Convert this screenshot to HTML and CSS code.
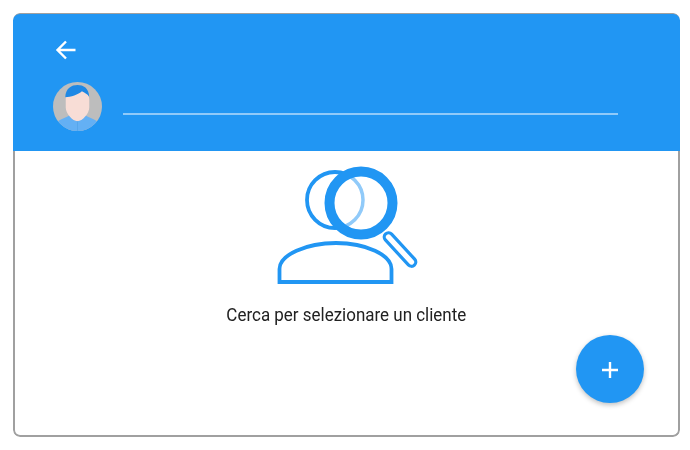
FILE: index.html
```html
<!DOCTYPE html>
<html lang="it">
<head>
<meta charset="utf-8">
<title>Cerca cliente</title>
<link rel="stylesheet" href="styles.css">
</head>
<body>
<main class="card">
  <header class="header">
    <button class="back" aria-label="Indietro">
      <svg width="24" height="24" viewBox="0 0 24 24" fill="none" stroke="#fff" stroke-width="2.4"><path d="M21.500 12H4M12 3.500 3.500 12l8.500 8.500"/></svg>
    </button>
    <div class="search-row">
      <svg class="avatar" width="49" height="49" viewBox="0 0 50 50">
        <defs><clipPath id="av"><circle cx="25" cy="25" r="25"/></clipPath></defs>
        <g clip-path="url(#av)">
          <rect width="50" height="50" fill="#bdbdbd"/>
          <path d="M2 50V43C6 38 13 37 19 33H31C37 37 44 38 48 43V50Z" fill="#64b0f4"/>
          <path d="M13 15C15 11 21 10 26 9C33 9 37 12 37 18V26C37 32 30 40 25 40C20 40 13 32 13 26Z" fill="#f8ddd6"/>
          <path d="M12.500 15.500C13 6 19 3 25 3C31 3 36.500 6 37 15C35 12 32 11 29.500 9.500C26 13 18 15.500 12.500 15.500Z" fill="#1e88e5"/>
          <path d="M25 40V50" stroke="#4f9fe6" stroke-width=".6"/>
        </g>
      </svg>
      <div class="search-line"></div>
    </div>
  </header>
  <section class="empty">
    <svg class="empty-icon" width="170" height="140" viewBox="0 0 170 140" fill="none" stroke="#2196f3">
      <defs><clipPath id="lens"><circle cx="100" cy="48" r="27"/></clipPath></defs>
      <circle cx="74" cy="45" r="28" stroke-width="3.800"/>
      <circle cx="100" cy="48" r="27" fill="#fff" stroke="none"/>
      <circle cx="74" cy="45" r="28" stroke="#90caf9" stroke-width="3.500" clip-path="url(#lens)"/>
      <rect x="-4.250" y="-4.250" width="8.500" height="42.500" rx="4.250" transform="translate(127.500 82) rotate(-42.600)" fill="#fff" stroke-width="3.200"/>
      <circle cx="100" cy="48" r="31.500" stroke-width="10"/>
      <path d="M18.500 127V114C18.500 100 45 88 75 88S130.500 100 130.500 114V127Z" stroke-width="3.800"/>
    </svg>
    <p class="empty-text">Cerca per selezionare un cliente</p>
  </section>
  <button class="fab" aria-label="Aggiungi">
    <svg width="18" height="18" viewBox="0 0 18 18" stroke="#fff" stroke-width="2.400"><path d="M9 1V17M1 9H17"/></svg>
  </button>
</main>
</body>
</html>
```
FILE: styles.css
```css
* { box-sizing: border-box; }
html, body { margin: 0; height: 100%; background: #fff; }
body { padding: 13px 10px 13px 13px; }
.card {
  position: relative;
  height: 424px;
  display: flex;
  flex-direction: column;
  background: #fff;
  border-radius: 7px;
  overflow: hidden;
  filter: blur(.45px);
  font-family: Roboto, "Liberation Sans", sans-serif;
}
.header {
  background: #2196f3;
  height: 138px;
  flex: none;
  padding: 24px 62px 0 40px;
  display: flex;
  flex-direction: column;
  border-radius: 7px 7px 0 0;
  border-top: 1px solid #a0a0a0;
}
.back {
  width: 24px;
  height: 24px;
  padding: 0;
  margin-left: 1px;
  border: 0;
  background: none;
  display: block;
}
.back svg { display: block; }
.search-row {
  margin-top: 20px;
  display: flex;
  align-items: flex-start;
  gap: 21px;
}
.avatar { flex: none; display: block; }
.search-line {
  flex: 1;
  height: 2px;
  margin-top: 31px;
  background: #90caf9;
}
.empty {
  display: flex;
  flex-direction: column;
  align-items: center;
  padding-top: 4px;
  border-left: 2px solid #a0a0a0;
  border-right: 2px solid #a0a0a0;
  border-bottom: 2px solid #a0a0a0;
  border-radius: 0 0 7px 7px;
  flex: 1;
}
.empty-icon { display: block; margin-left: -2px; }
.empty-text {
  margin: 9px 0 0;
  font-size: 19px;
  line-height: 22px;
  color: #212121;
  transform: scaleX(.893);
  white-space: nowrap;
}
.fab {
  position: absolute;
  left: 563px;
  top: 322px;
  width: 68px;
  height: 68px;
  border: 0;
  padding: 2px 0 0;
  border-radius: 50%;
  background: #2196f3;
  box-shadow: 0 2px 5px rgba(0,0,0,.25);
  display: flex;
  align-items: center;
  justify-content: center;
}
```
